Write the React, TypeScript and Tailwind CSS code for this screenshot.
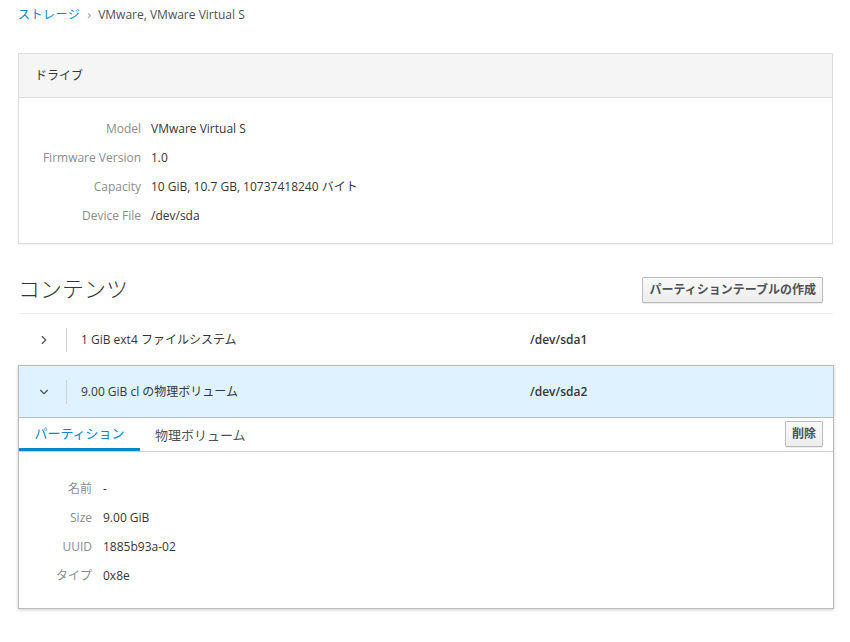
import { ChevronDown, ChevronRight } from 'lucide-react';

const font = { fontFamily: '"Open Sans", "Noto Sans CJK JP", sans-serif' };

const driveRows: [string, string][] = [
  ['Model', 'VMware Virtual S'],
  ['Firmware Version', '1.0'],
  ['Capacity', '10 GiB, 10.7 GB, 10737418240 バイト'],
  ['Device File', '/dev/sda'],
];

const partRows: [string, string][] = [
  ['名前', '-'],
  ['Size', '9.00 GiB'],
  ['UUID', '1885b93a-02'],
  ['タイプ', '0x8e'],
];

const Btn = ({ children, className = '' }: { children: React.ReactNode; className?: string }) => (
  <button
    className={`h-[26px] rounded-[1px] border border-[#bbb] bg-gradient-to-b from-[#fafafa] to-[#ededed] px-[6px] text-[12px] font-semibold text-[#4d5258] shadow-[0_1px_1px_rgba(3,3,3,0.08)] ${className}`}
  >
    {children}
  </button>
);

export default function App() {
  return (
    <div className="min-h-[642px] bg-white px-[18px] pt-[6px] text-[12px] text-[#363636]" style={font}>
      <div className="flex h-[18px] items-center">
        <span className="tracking-[0.5px] text-[#0088ce]">ストレージ</span>
        <span className="mx-[7px] text-[13px] text-[#9c9c9c]">›</span>
        <span className="text-[#4d5258]">VMware, VMware Virtual S</span>
      </div>

      <div className="mt-[29px] w-[815px] border border-[#ddd] shadow-[0_1px_1px_rgba(3,3,3,0.05)]">
        <div className="flex h-[44px] items-center border-b border-[#ddd] bg-[#f5f5f5] px-[16px]">ドライブ</div>
        <div className="pt-[16px] pb-[13px]">
          {driveRows.map(([k, v]) => (
            <div key={k} className="flex h-[29px] items-center">
              <div className="w-[122px] text-right text-[#8b8d8f]">{k}</div>
              <div className="ml-[10px]">{v}</div>
            </div>
          ))}
        </div>
      </div>

      <div className="mt-[26px] flex h-[36px] w-[815px] items-center justify-between">
        <h2 className="text-[22px] font-light leading-none text-[#363636]">コンテンツ</h2>
        <Btn className="mr-[10px] mt-[3px]">パーティションテーブルの作成</Btn>
      </div>
      <div className="mt-[7px] w-[815px] border-t border-[#ededed]" />

      <div className="flex h-[51px] w-[815px] items-center">
        <div className="pl-[19px]">
          <ChevronRight size={14} strokeWidth={2} className="text-[#4d5258]" />
        </div>
        <div className="ml-[15px] h-[24px] border-l border-[#d1d1d1]" />
        <div className="ml-[14px] w-[449px]">1 GiB ext4 ファイルシステム</div>
        <div className="font-semibold">/dev/sda1</div>
      </div>

      <div className="w-[816px] border border-[#bbb] shadow-[0_1px_3px_rgba(3,3,3,0.2)]">
        <div className="flex h-[52px] items-center border-b border-[#bbb] bg-[#def3ff]">
          <div className="pl-[18px]">
            <ChevronDown size={14} strokeWidth={2} className="text-[#4d5258]" />
          </div>
          <div className="ml-[15px] h-[24px] border-l border-[#d1d1d1]" />
          <div className="ml-[14px] w-[449px]">9.00 GiB cl の物理ボリューム</div>
          <div className="font-semibold">/dev/sda2</div>
        </div>
        <div className="flex h-[34px] items-end justify-between border-b border-[#d1d1d1]">
          <div className="flex">
            <div className="flex h-[33px] w-[121px] items-center justify-center border-b-[3px] border-[#0088ce] pt-[2px] text-[13px] text-[#0088ce]">
              パーティション
            </div>
            <div className="flex h-[33px] items-center pt-[2px] pl-[15px] text-[13px] text-[#4d5258]">物理ボリューム</div>
          </div>
          <Btn className="mb-[4px] mr-[10px]">削除</Btn>
        </div>
        <div className="pt-[22px] pb-[18px]">
          {partRows.map(([k, v]) => (
            <div key={k} className="flex h-[29px] items-center">
              <div className="w-[73px] text-right text-[#8b8d8f]">{k}</div>
              <div className="ml-[11px]">{v}</div>
            </div>
          ))}
        </div>
      </div>
    </div>
  );
}
